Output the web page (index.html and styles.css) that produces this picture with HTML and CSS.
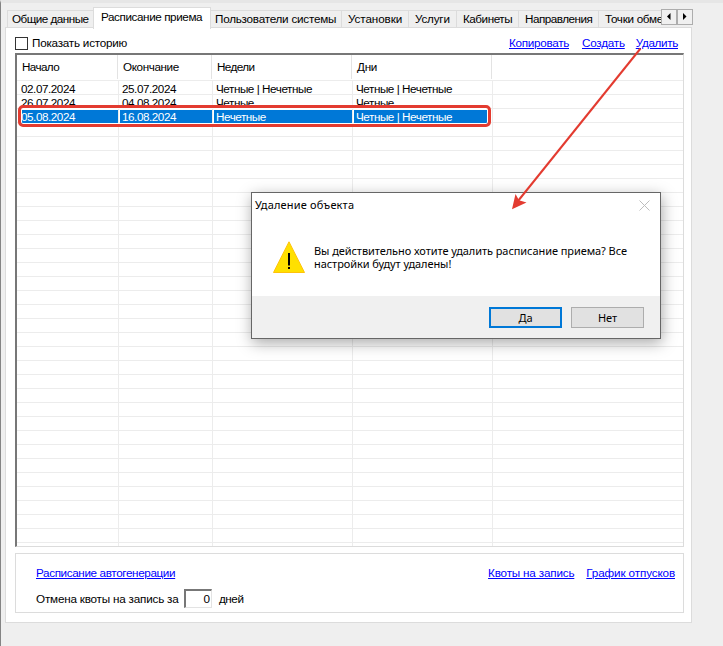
FILE: index.html
```html
<!DOCTYPE html>
<html lang="ru">
<head>
<meta charset="utf-8">
<title>Расписание приема</title>
<link rel="stylesheet" href="styles.css">
</head>
<body>
<div class="window">
  <nav class="tabs">
    <div class="tab t1"><span>Общие данные</span></div>
    <div class="tab t2 active"><span>Расписание приема</span></div>
    <div class="tab t3"><span>Пользователи системы</span></div>
    <div class="tab t4"><span>Установки</span></div>
    <div class="tab t5"><span>Услуги</span></div>
    <div class="tab t6"><span>Кабинеты</span></div>
    <div class="tab t7"><span>Направления</span></div>
    <div class="tab t8"><span>Точки обмена</span></div>
    <div class="scroll"><svg viewBox="0 0 14 14"><path d="M8.500 3v7L5 6.500z"/></svg></div>
    <div class="scroll"><svg viewBox="0 0 14 14"><path d="M5 3v7l3.500-3.500z"/></svg></div>
  </nav>
  <main class="page">
    <div class="toolbar">
      <label class="check"><i class="box"></i><span>Показать историю</span></label>
      <a class="l1">Копировать</a><a class="l2">Создать</a><a class="l3">Удалить</a>
    </div>
    <div class="list">
      <div class="row head"><div class="h1">Начало</div><div class="h2">Окончание</div><div class="h3">Недели</div><div class="h4">Дни</div><div></div></div>
      <div class="body">
        <div class="row"><div>02.07.2024</div><div>25.07.2024</div><div>Четные | Нечетные</div><div>Четные | Нечетные</div><div></div></div>
        <div class="row"><div>26.07.2024</div><div>04.08.2024</div><div>Четные</div><div>Четные</div><div></div></div>
        <div class="row selected"><div>05.08.2024</div><div>16.08.2024</div><div>Нечетные</div><div>Четные | Нечетные</div><div></div></div>
      </div>
    </div>
    <div class="group">
      <div class="line"><a class="g1">Расписание автогенерации</a><a class="g2">Квоты на запись</a><a class="g3">График отпусков</a></div>
      <div class="line second"><span class="q">Отмена квоты на запись за</span><span class="field">0</span><span class="days">дней</span></div>
    </div>
  </main>
</div>
<div class="outline"></div>
<section class="dialog">
  <header><span class="title">Удаление объекта</span>
    <svg class="close" viewBox="0 0 11 11"><path d="M.5.500l10 10M10.500.500l-10 10"/></svg></header>
  <div class="message">
    <svg class="warn" viewBox="0 0 32 32"><path class="tri" d="M16 .8L31.500 31.500H.5z"/><path class="mark" d="M15 12h2v12.500h-2zM15 26h2v2h-2z"/></svg>
    <p><span class="m1">Вы действительно хотите удалить расписание приема? Все</span><span class="m2">настройки будут удалены!</span></p>
  </div>
  <footer><div class="btn primary">Да</div><div class="btn">Нет</div></footer>
</section>
<svg class="arrow" viewBox="0 0 723 646"><path class="shaft" d="M640.500 48.500L518 201"/><path class="tip" d="M512 209.300l3.500-15.300 3.500 6.200 7.500 2.400z"/></svg>
</body>
</html>
```

FILE: styles.css
```css
* { box-sizing: border-box; }
body {
  margin: 0; width: 723px; height: 646px; overflow: hidden; position: relative;
  background: #efefef; color: #000;
  font: 11.7px/14px "Liberation Sans", Arial, sans-serif; white-space: nowrap;
}
.window { height: 646px; border-left: 1px solid #848484; border-top: 3px solid #e6e6e6; padding: 5px 31px 0 4px; }
a { color: #00f; text-decoration: underline; text-underline-offset: 1px; text-decoration-thickness: 1px; }
.tabs { display: flex; height: 20px; padding-left: 2px; align-items: flex-start; }
.tab { height: 17px; margin-top: 2px; border: 1px solid #dcdcdc; border-left: 0; border-bottom: 0; padding: 1px 0 0 5px; overflow: hidden; flex: none; letter-spacing: -.47px; }
.t1 { width: 86px; border-left: 1px solid #dcdcdc; border-right: 0; padding-left: 4px; letter-spacing: -.52px; }
.t2 { width: 118px; letter-spacing: -.41px; }
.t3 { width: 131px; padding-left: 4px; letter-spacing: -.24px; }
.t4 { width: 67px; padding-left: 6px; letter-spacing: -.1px; }
.t5 { width: 48px; padding-left: 6px; letter-spacing: -.2px; }
.t6 { width: 62px; padding-left: 6px; }
.t7 { width: 80px; padding-left: 6px; letter-spacing: -.5px; }
.t8 { width: 62px; padding-left: 6px; border-right: 0; letter-spacing: -.3px; }
.tab.active { height: 22px; margin-top: -1px; background: #fff; border-left: 1px solid #dcdcdc; padding: 2px 0 0 7px; position: relative; }
.scroll { width: 16px; height: 16px; margin-top: 1px; border: 1px solid #adadad; background: #f0f0f0; flex: none; }
.scroll svg { width: 14px; height: 14px; display: block; }
.page { height: 596px; width: 687px; margin-top: -1px; background: #fff; border: 1px solid #dcdcdc; padding: 7px 7px 0 9px; }
.toolbar { display: flex; height: 18px; padding: 1px 6px 0 0; }
.check { display: flex; margin-right: auto; letter-spacing: -.23px; }
.box { width: 13px; height: 13px; border: 1px solid #333; margin: 1px 4px 0 0; }
.toolbar a { margin-left: 13px; }
.l1 { letter-spacing: -.29px; }
.l2 { letter-spacing: -.24px; }
.toolbar .l3 { letter-spacing: -.34px; margin-left: 11px; }
.list { height: 494px; width: 669px; border: 1px solid #dcdcdc; border-top: 2px solid #696969; border-left: 2px solid #696969; box-shadow: inset 0 0 0 0 #fff; border-top-color: #777; border-left-color: #777; }
.row { display: grid; grid-template-columns: 102px 94px 140px 140px 1fr; height: 14px; letter-spacing: -.45px; }
.row > div { padding-left: 5px; border-right: 1px solid #ececec; }
.row > div:last-child { border-right: 0; }
.head { height: 25px; grid-template-columns: 101px 94px 140px 140px 1fr; }
.head > div { padding: 5px 0 0 5px; border-color: #e3e3e3; height: 24px; }
.h1, .h3 { letter-spacing: -.6px; }
.h2 { letter-spacing: -.4px; }
.h4 { letter-spacing: -.25px; }
.body {
  height: 466px;
  background:
    linear-gradient(#ececec,#ececec) 101px 0/1px 100% no-repeat,
    linear-gradient(#ececec,#ececec) 195px 0/1px 100% no-repeat,
    linear-gradient(#ececec,#ececec) 335px 0/1px 100% no-repeat,
    linear-gradient(#ececec,#ececec) 475px 0/1px 100% no-repeat,
    repeating-linear-gradient(#ececec 0 1px, transparent 1px 14px);
}
.body .row > div { padding: 2px 0 0 3px; }
.body .row > div:first-child { padding-left: 4px; }
.selected > div:not(:last-child) { color: #fff; position: relative; z-index: 0; }
.selected > div:not(:last-child)::before { content: ""; position: absolute; z-index: -1; inset: 2px 0 0 1px; background: #0078d7; }
.selected > div:first-child::before { left: 4px !important; }
.selected > div:nth-child(4)::before { right: 4px !important; }
.group { margin-top: 6px; width: 669px; height: 60px; border: 1px solid #dcdcdc; padding: 12px 8px 0 20px; }
.line { display: flex; height: 22px; }
.g1 { margin-right: auto; letter-spacing: -.37px; }
.g2 { letter-spacing: -.18px; }
.g3 { margin-left: 12px; letter-spacing: -.13px; }
.second { padding-top: 4px; }
.q { width: 143px; letter-spacing: -.2px; }
.field { width: 28px; height: 19px; margin: -3px 7px 0 5px; border: 1px solid #e3e3e3; border-top: 2px solid #777; border-left: 2px solid #777; text-align: right; padding: 1px 1px 0 0; }
.days { letter-spacing: -.45px; }
.outline { position: absolute; left: 18px; top: 105px; width: 473px; height: 22px; border: 3px solid #e33b30; border-radius: 5px; box-shadow: inset 0 0 0 1px #fff; }
.dialog { position: absolute; left: 251px; top: 192px; width: 410px; height: 147px; border: 1px solid #666; background: #fff; box-shadow: 1px 4px 14px rgba(0,0,0,.34); font: 11px/13px "Noto Sans", sans-serif; display: flex; flex-direction: column; }
.dialog header { height: 41px; display: flex; justify-content: space-between; padding: 5px 10px 0 3px; }
.title { letter-spacing: .17px; }
.close { width: 11px; height: 11px; margin-top: 2px; }
.close path { stroke: #bdbdbd; stroke-width: 1; fill: none; }
.message { display: flex; padding: 7px 0 0 21px; height: 62px; }
.m1, .m2 { display: block; letter-spacing: -.07px; }
.warn { width: 32px; height: 32px; }
.tri { fill: #ffe000; stroke: #ffc20a; }
.message p { margin: 3px 0 0 9px; }
.dialog footer { flex: 1; background: #f0f0f0; display: flex; justify-content: flex-end; gap: 9px; padding: 11px 16px 0 0; }
.btn { width: 73px; height: 21px; border: 1px solid #adadad; background: #e1e1e1; text-align: center; line-height: 20px; }
.btn.primary { border: 2px solid #0078d7; line-height: 18px; }
.arrow { position: absolute; left: 0; top: 0; width: 723px; height: 646px; pointer-events: none; }
.shaft { stroke: #e33b30; stroke-width: 2; }
.tip { fill: #e33b30; }
```
